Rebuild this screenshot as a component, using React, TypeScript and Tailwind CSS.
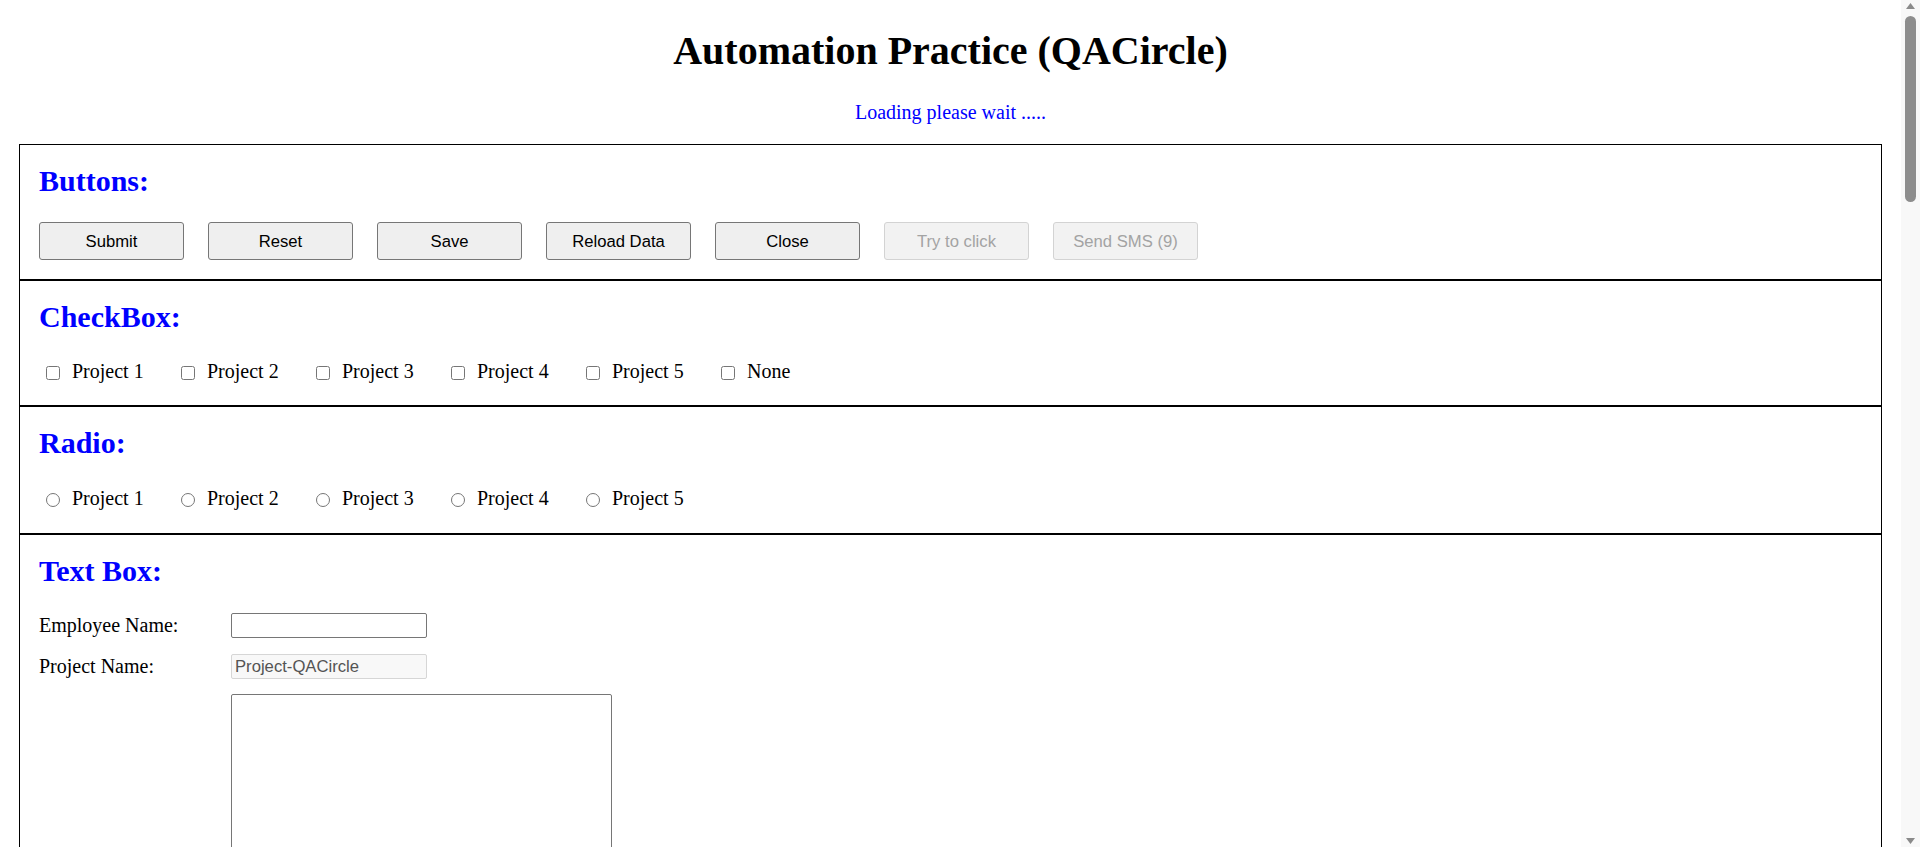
import React, { useState } from 'react';

const buttons = [
  { label: 'Submit' },
  { label: 'Reset' },
  { label: 'Save' },
  { label: 'Reload Data' },
  { label: 'Close' },
  { label: 'Try to click', disabled: true },
  { label: 'Send SMS (9)', disabled: true },
];

const projects = ['Project 1', 'Project 2', 'Project 3', 'Project 4', 'Project 5'];

function Heading({ children }: { children: React.ReactNode }) {
  return <h2 className="text-[30px] leading-[34px] font-bold text-[#0000ff]">{children}</h2>;
}

// page scrollbar as it shows in the screenshot
function ScrollTrack() {
  return (
    <aside className="sticky top-0 w-[19px] h-[847px] shrink-0 bg-[#f8f8f8] flex flex-col items-center">
      <svg width="9" height="6" viewBox="0 0 9 6" className="mt-[3px]">
        <polygon points="4.5,0 9,6 0,6" fill="#8a8a8a" />
      </svg>
      <div className="mt-[7px] w-[11px] h-[186px] rounded-full bg-[#8d8d8d]" />
      <div className="flex-1" />
      <svg width="9" height="6" viewBox="0 0 9 6" className="mb-[3px]">
        <polygon points="0,0 9,0 4.5,6" fill="#8a8a8a" />
      </svg>
    </aside>
  );
}

export default function App() {
  const [employee, setEmployee] = useState('');
  const [notes, setNotes] = useState('');

  return (
    <div className="flex items-start bg-white">
      <main className="flex-1 min-w-0 text-black font-['Liberation_Serif','Times_New_Roman',serif] text-[20px] leading-[23px] pb-[40px]">
        <h1 className="pt-[28px] text-center text-[40px] leading-[46px] font-bold">Automation Practice (QACircle)</h1>
        <div className="mt-[27px] text-center text-[#0000ff]">Loading please wait .....</div>

        <div className="mt-[20px] mx-[19px]">
          {/* Buttons */}
          <div className="border border-black px-[19px] pt-[19px] pb-[19px]">
            <Heading>Buttons:</Heading>
            <div className="mt-[24px] flex gap-[24px]">
              {buttons.map(b => (
                <button
                  key={b.label}
                  disabled={b.disabled}
                  className={
                    b.disabled
                      ? "w-[145px] h-[38px] rounded-[3px] border border-[#d3d3d3] bg-[#f2f2f2] text-[#a3a3a3] font-['Liberation_Sans',Arial,sans-serif] text-[16.67px]"
                      : "w-[145px] h-[38px] rounded-[3px] border border-[#767676] bg-[#efefef] text-black font-['Liberation_Sans',Arial,sans-serif] text-[16.67px]"
                  }
                >
                  {b.label}
                </button>
              ))}
            </div>
          </div>

          {/* CheckBox */}
          <div className="border border-black px-[19px] pt-[19px] pb-[22px]">
            <Heading>CheckBox:</Heading>
            <div className="mt-[26px] flex">
              {[...projects, 'None'].map(p => (
                <label key={p} className="w-[135px] flex items-center">
                  <input type="checkbox" className="ml-[7px] mt-[3px] w-[14px] h-[14px]" />
                  <span className="ml-[12px]">{p}</span>
                </label>
              ))}
            </div>
          </div>

          {/* Radio */}
          <div className="border border-black px-[19px] pt-[19px] pb-[23px]">
            <Heading>Radio:</Heading>
            <div className="mt-[27px] flex">
              {projects.map(p => (
                <label key={p} className="w-[135px] flex items-center">
                  <input type="radio" name="project" className="ml-[7px] mt-[3px] w-[14px] h-[14px]" />
                  <span className="ml-[12px]">{p}</span>
                </label>
              ))}
            </div>
          </div>

          {/* Text Box */}
          <div className="border border-black px-[19px] pt-[19px] pb-[19px]">
            <Heading>Text Box:</Heading>
            <div className="mt-[25px] flex items-center">
              <label className="w-[192px]">Employee Name:</label>
              <input
                value={employee}
                onChange={e => setEmployee(e.target.value)}
                className="w-[196px] h-[25px] px-[3px] rounded-[2px] border border-[#767676] bg-white font-['Liberation_Sans',Arial,sans-serif] text-[16.67px]"
              />
            </div>
            <div className="mt-[16px] flex items-center">
              <label className="w-[192px]">Project Name:</label>
              <input
                value="Project-QACircle"
                disabled
                readOnly
                className="w-[196px] h-[25px] px-[3px] rounded-[2px] border border-[#d6d6d6] bg-[#f8f8f8] text-[#545454] font-['Liberation_Sans',Arial,sans-serif] text-[16.67px]"
              />
            </div>
            <div className="mt-[15px] ml-[192px]">
              <textarea
                value={notes}
                onChange={e => setNotes(e.target.value)}
                className="block w-[381px] h-[200px] p-[3px] rounded-[2px] border border-[#767676] bg-white resize font-['Liberation_Mono','Courier_New',monospace] text-[16.67px]"
              />
            </div>
          </div>
        </div>
      </main>
      <ScrollTrack />
    </div>
  );
}
